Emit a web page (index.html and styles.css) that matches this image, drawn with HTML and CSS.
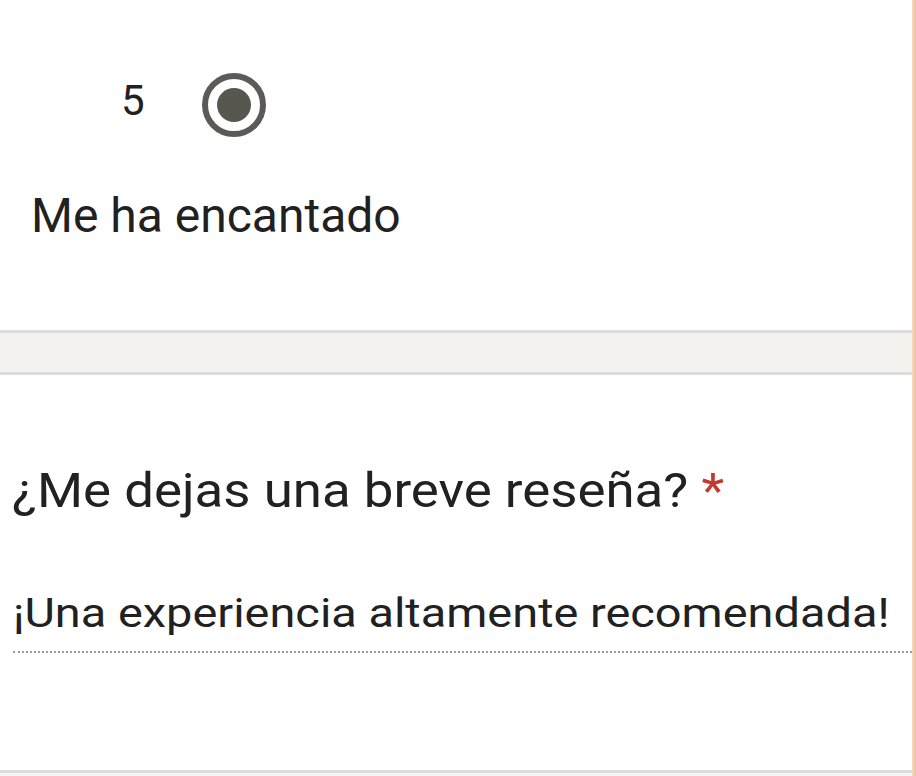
FILE: index.html
```html
<!DOCTYPE html>
<html lang="es">
<head>
<meta charset="utf-8">
<link rel="stylesheet" href="styles.css">
</head>
<body>
<div class="page">
  <main class="form">
    <section class="card card-rating">
      <div class="option-row">
        <span class="option-num">5</span>
        <span class="radio checked"><span class="radio-dot"></span></span>
      </div>
      <div class="option-label">Me ha encantado</div>
    </section>
    <div class="gap-band"></div>
    <section class="card card-question">
      <div class="question"><span class="question-text">¿Me dejas una breve reseña? <span class="required">*</span></span></div>
      <div class="answer"><span class="answer-text">¡Una experiencia altamente recomendada!</span></div>
    </section>
    <div class="bottom-edge"></div>
  </main>
  <div class="side-strip"></div>
</div>
</body>
</html>
```
FILE: styles.css
```css
html, body {
  margin: 0;
  padding: 0;
  background: #ffffff;
}
body {
  font-family: Roboto, "Liberation Sans", Arial, sans-serif;
  color: #212121;
}
.page {
  display: flex;
  width: 916px;
  height: 776px;
  overflow: hidden;
}
.form {
  flex: 1;
  display: flex;
  flex-direction: column;
  background: #fff;
}
.side-strip {
  width: 4px;
  background: linear-gradient(to right, #f6d9c3, #efbf9c);
}
.card {
  background: #fff;
}
.card-rating {
  padding-top: 73px;
  padding-bottom: 86px;
}
.option-row {
  display: flex;
  align-items: center;
  height: 64px;
  padding-left: 121px;
}
.option-num {
  font-size: 42px;
  line-height: 48px;
  margin-bottom: 8px;
  width: 81px;
}
.radio {
  width: 64px;
  height: 64px;
  box-sizing: border-box;
  border: 6px solid #5b5a56;
  border-radius: 50%;
  display: flex;
  align-items: center;
  justify-content: center;
}
.radio-dot {
  width: 34px;
  height: 34px;
  border-radius: 50%;
  background: #57564f;
}
.option-label {
  margin-top: 51px;
  padding-left: 31px;
  font-size: 48px;
  line-height: 56px;
}
.gap-band {
  height: 39px;
  background: #f3f2ef;
  border-top: 3px solid #dedddb;
  border-bottom: 3px solid #dedddb;
}
.card-question {
  padding-top: 88px;
  padding-bottom: 117px;
}
.question {
  padding-left: 12px;
  font-size: 48px;
  line-height: 56px;
}
.question-text {
  display: inline-block;
  transform: scaleX(1.1);
  transform-origin: left center;
}
.required {
  color: #c4392f;
}
.answer {
  margin-top: 70px;
  margin-left: 13px;
  font-size: 41px;
  line-height: 48px;
  padding-bottom: 14px;
  border-bottom: 2px dotted #9a9a9a;
}
.answer-text {
  display: inline-block;
  transform: scaleX(1.144);
  transform-origin: left center;
}
.bottom-edge {
  flex: 1;
  border-top: 3px solid #dcdcdc;
  background: #f4f4f4;
}
```
